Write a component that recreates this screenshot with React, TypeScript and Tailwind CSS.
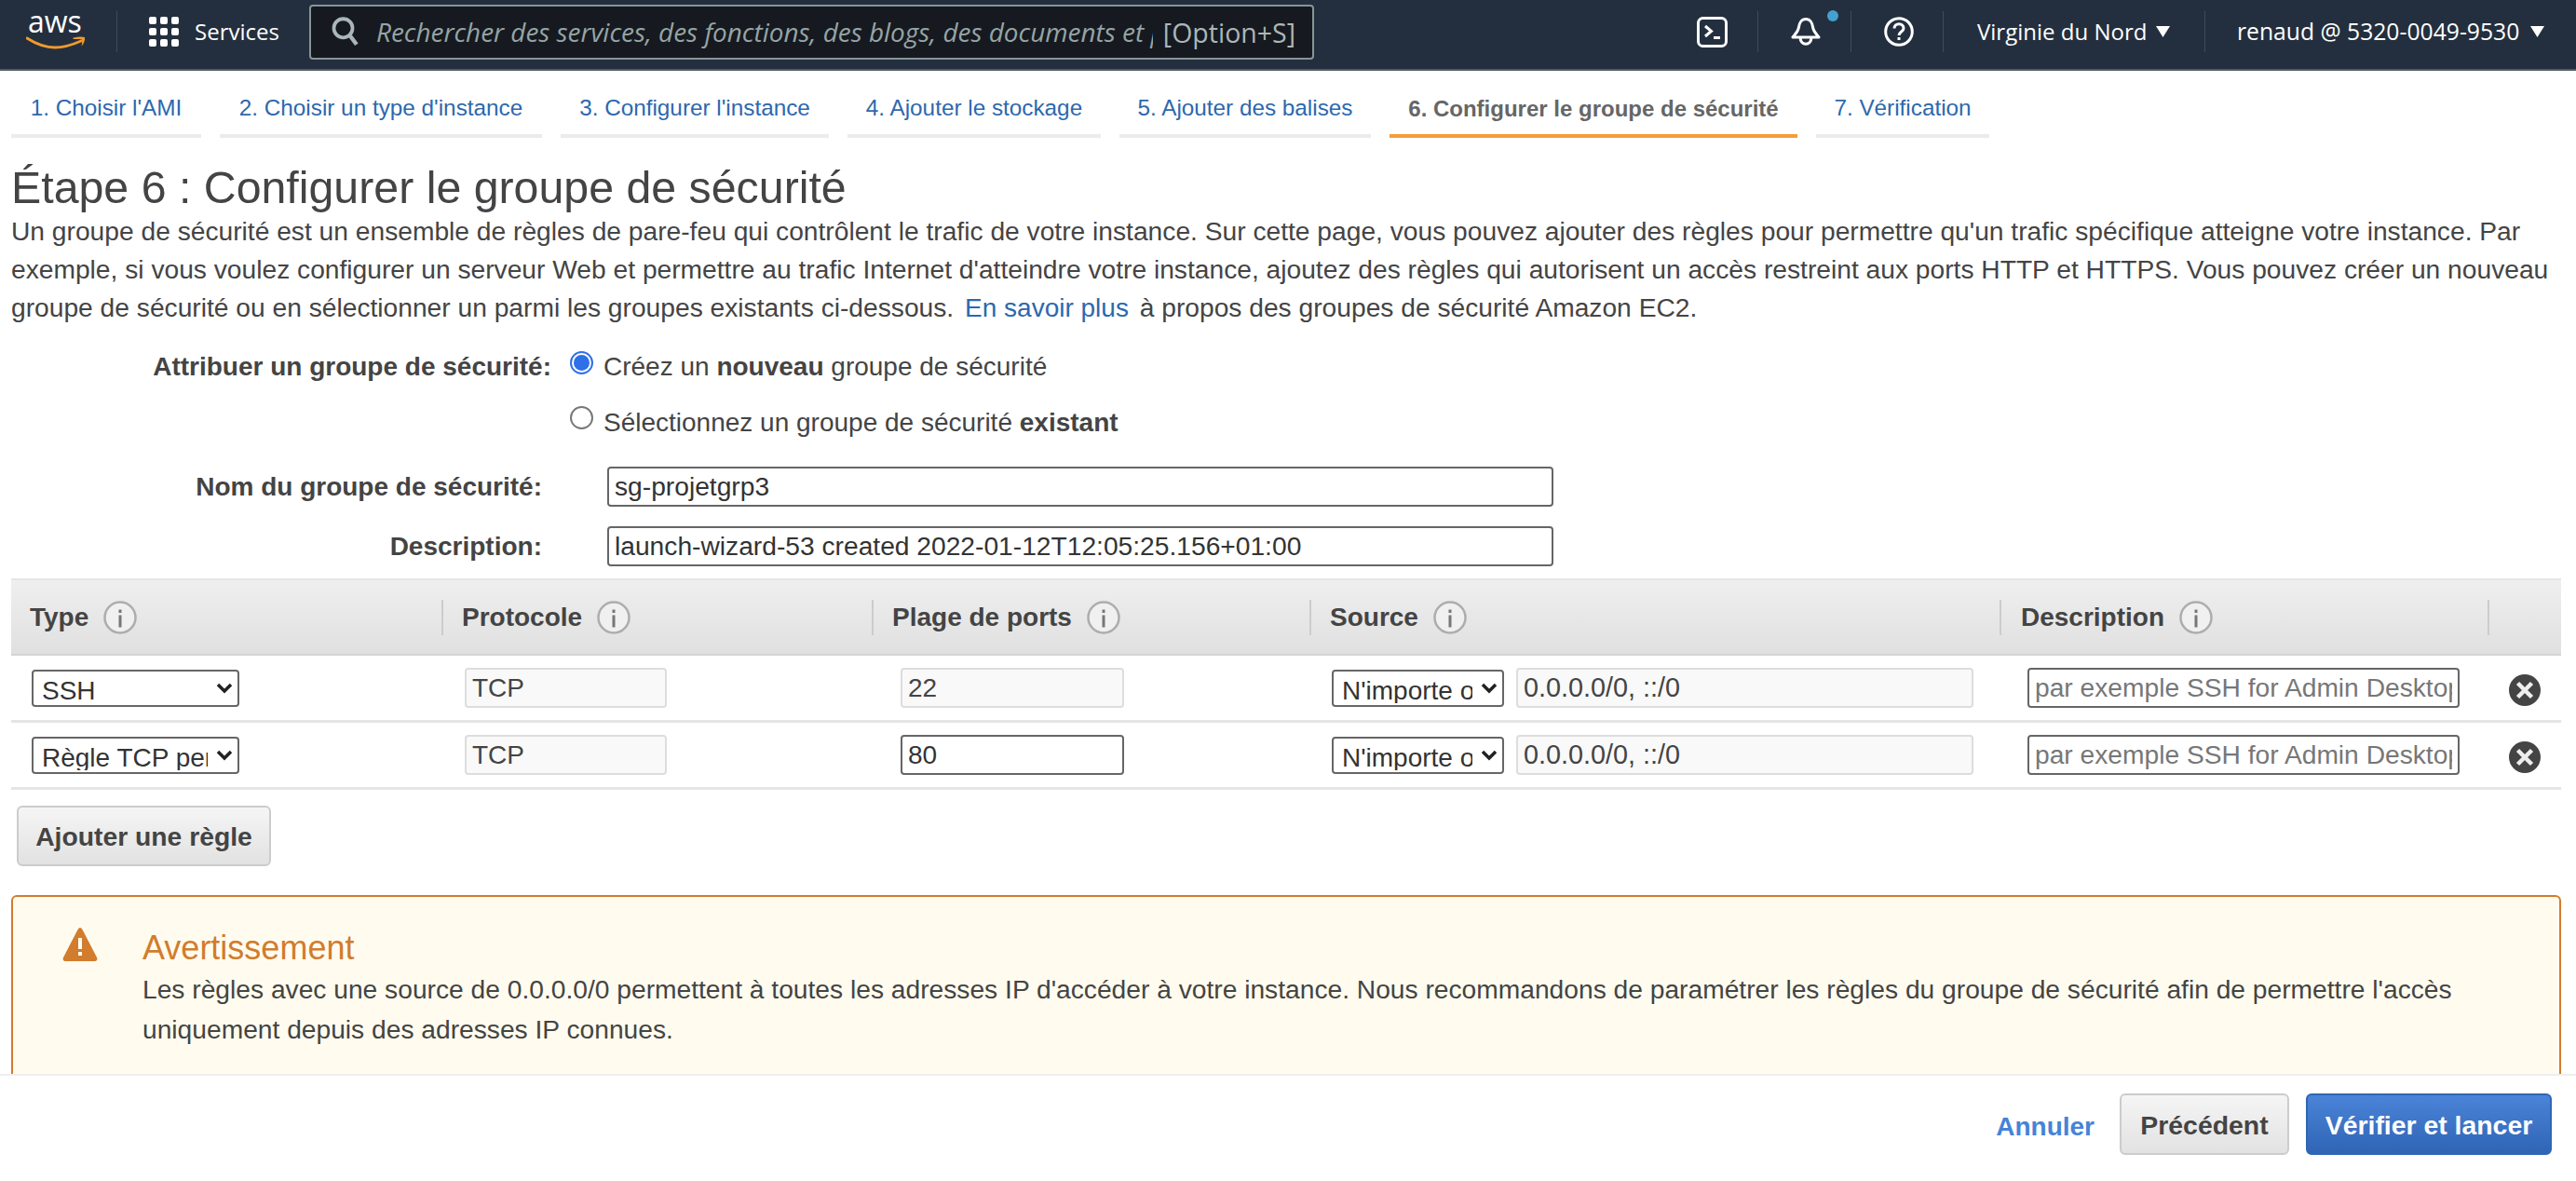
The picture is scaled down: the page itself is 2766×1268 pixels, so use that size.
import React from 'react';

const sans = "font-['Liberation_Sans',Arial,sans-serif]";

function Sep() {
  return <div className="h-11 w-px shrink-0 bg-[#414b58]" />;
}

function Caret() {
  return (
    <svg width="15" height="12" viewBox="0 0 15 12" className="shrink-0">
      <path d="M0 0h15L7.500 12z" fill="#fff" />
    </svg>
  );
}

function AwsLogo() {
  return (
    <div className="relative h-[44px] w-[64px]">
      <span className="absolute left-[2px] top-[-9px] font-['Open_Sans',sans-serif] text-[32px] leading-[40px] text-white">aws</span>
      <svg viewBox="0 0 64 14" width="64" height="14" className="absolute left-0 top-[27px]">
        <path d="M1 2C12 9 22 12 31 12c10 0 19-3 28-7" fill="none" stroke="#f09a2e" strokeWidth="3" strokeLinecap="round" />
        <path d="M51 1.500c4-1 9-1.500 12-.5.500 3-1 7-3.500 9.500 .5-2.500 1-5 .5-7-2-.7-6-.7-9-.5-.7 0-1-1.200 0-1.500z" fill="#f09a2e" />
      </svg>
    </div>
  );
}

function GridIcon() {
  const dots = Array.from({ length: 9 });
  return (
    <div className="grid shrink-0 grid-cols-3 gap-[4px]">
      {dots.map((_, i) => (
        <div key={i} className="h-[8px] w-[8px] rounded-[2px] bg-white" />
      ))}
    </div>
  );
}

function InfoIcon() {
  return (
    <svg width="36" height="36" viewBox="0 0 36 36" className="shrink-0">
      <circle cx="18" cy="18" r="16.500" fill="#f0f0f0" stroke="#adadad" strokeWidth="2.500" />
      <rect x="16.500" y="15.500" width="3" height="13" fill="#777" />
      <rect x="16.500" y="9.500" width="3" height="3.500" fill="#777" />
    </svg>
  );
}

function RemoveIcon() {
  return (
    <svg width="34" height="34" viewBox="0 0 34 34" className="mt-[4px]">
      <circle cx="17" cy="17" r="17" fill="#444" />
      <path d="M9.500 9.500l15 15M24.500 9.500l-15 15" stroke="#eee" strokeWidth="4.500" />
    </svg>
  );
}

function Chevron() {
  return (
    <svg width="18" height="12" viewBox="0 0 18 12" className="pointer-events-none absolute right-[7px] top-[14px]">
      <path d="M2 2l7 7 7-7" fill="none" stroke="#222" strokeWidth="3.500" />
    </svg>
  );
}

function RuleSelect({ value, className }: { value: string; className: string }) {
  return (
    <div className={`relative h-[40px] ${className}`}>
      <select
        defaultValue={value}
        className={`${sans} h-full w-full appearance-none rounded-[4px] border-2 border-[#666] bg-white pb-[2px] pl-[9px] pr-[32px] text-[28px] text-[#333] outline-none`}
      >
        <option>{value}</option>
      </select>
      <Chevron />
    </div>
  );
}

function ReadonlyInput({ value, className }: { value: string; className: string }) {
  return (
    <input
      readOnly
      value={value}
      className={`${sans} h-[43px] rounded-[4px] border-2 border-[#ddd] bg-[#f9f9f9] px-[6px] text-[#444] outline-none ${className}`}
    />
  );
}

function TextInput({ value, placeholder, className }: { value?: string; placeholder?: string; className: string }) {
  return (
    <input
      readOnly
      value={value ?? ''}
      placeholder={placeholder}
      className={`${sans} h-[43px] rounded-[4px] border-2 border-[#666] bg-white px-[6px] text-[#333] outline-none placeholder:text-[#777] ${className}`}
    />
  );
}

function RuleRow({ type, port, portEditable }: { type: string; port: string; portEditable?: boolean }) {
  return (
    <div className="grid h-[72px] grid-cols-[462px_462px_470px_741px_524px_79px] items-center border-b-[3px] border-[#e5e5e5]">
      <div className="pl-[22px]">
        <RuleSelect value={type} className="w-[223px]" />
      </div>
      <div className="pl-[25px]">
        <ReadonlyInput value="TCP" className="w-[217px] text-[28px]" />
      </div>
      <div className="pl-[31px]">
        {portEditable ? <TextInput value={port} className="w-[240px] text-[28px]" /> : <ReadonlyInput value={port} className="w-[240px] text-[28px]" />}
      </div>
      <div className="flex items-center gap-[13px] pl-[24px]">
        <RuleSelect value="N'importe où" className="w-[185px]" />
        <ReadonlyInput value="0.0.0.0/0, ::/0" className="w-[491px] text-[28.800px]" />
      </div>
      <div className="pl-[30px]">
        <TextInput placeholder="par exemple SSH for Admin Desktop" className="w-[464px] text-[28.200px]" />
      </div>
      <div className="flex justify-center">
        <RemoveIcon />
      </div>
    </div>
  );
}

function HeadCell({ label, className }: { label: string; className: string }) {
  return (
    <div className={`flex h-[38px] items-center gap-[16px] border-[#ccc] ${className}`}>
      <span className="text-[28px] font-bold text-[#444]">{label}</span>
      <InfoIcon />
    </div>
  );
}

const tabs = [
  { label: "1. Choisir l'AMI", width: 'w-[204px]' },
  { label: "2. Choisir un type d'instance", width: 'w-[346px]' },
  { label: "3. Configurer l'instance", width: 'w-[288px]' },
  { label: '4. Ajouter le stockage', width: 'w-[272px]' },
  { label: '5. Ajouter des balises', width: 'w-[270px]' },
];

export default function App() {
  return (
    <div className={`${sans} flex h-[1268px] w-[2766px] flex-col overflow-hidden bg-white text-[#444]`}>
      <header className="flex h-[76px] shrink-0 items-center border-b-2 border-[#545b64] bg-[#232f3e] pb-[6px] font-['Open_Sans',sans-serif] text-white">
        <div className="ml-[28px] mr-[33px]">
          <AwsLogo />
        </div>
        <Sep />
        <div className="ml-[34px] mr-[35px] flex w-[137px] items-center gap-[17px]">
          <GridIcon />
          <span className="text-[24px]">Services</span>
        </div>
        <div className="flex h-[59px] w-[1079px] items-center rounded-[4px] border-2 border-[#879596] bg-[#16191f] pl-[22px] pr-[18px]">
          <svg width="30" height="34" viewBox="0 0 24 26" className="shrink-0">
            <circle cx="10" cy="10" r="8" fill="none" stroke="#aab7b8" strokeWidth="3" />
            <path d="M15.500 16l6 8" stroke="#aab7b8" strokeWidth="3.500" />
          </svg>
          <div className="ml-[18px] w-[834px] shrink-0 overflow-hidden whitespace-nowrap pt-[2px] text-[27.900px] italic text-[#95a5a6]">
            Rechercher des services, des fonctions, des blogs, des documents et plus encore
          </div>
          <span className="ml-auto whitespace-nowrap pt-[2px] text-[28.500px] text-[#aab7b8]">[Option+S]</span>
        </div>
        <div className="ml-auto flex items-center">
          <svg width="33" height="33" viewBox="0 0 33 33" className="mr-[32px] shrink-0">
            <rect x="1.500" y="1.500" width="30" height="30" rx="5" fill="none" stroke="#fff" strokeWidth="3" />
            <path d="M9 10l6.500 5.500L9 21" fill="none" stroke="#fff" strokeWidth="3" />
            <rect x="18" y="21" width="7" height="3" fill="#fff" />
          </svg>
          <Sep />
          <div className="relative ml-[35px] mr-[32px] h-[32px] w-[32px] shrink-0">
            <svg width="32" height="32" viewBox="0 0 32 32">
              <path d="M16 2.500c-4.500 0-7 4-7.500 8.500C8 15.500 5 18 2 22h28c-3-4-6-6.500-6.500-11C23 6.500 20.500 2.500 16 2.500z" fill="none" stroke="#fff" strokeWidth="3" strokeLinejoin="round" />
              <path d="M10 22c0 9.500 12 9.500 12 0" fill="none" stroke="#fff" strokeWidth="3" />
            </svg>
            <div className="absolute right-[-19px] top-[-7px] h-[12px] w-[12px] rounded-full bg-[#44a0cf]" />
          </div>
          <Sep />
          <svg width="32" height="32" viewBox="0 0 32 32" className="ml-[35px] mr-[31px] shrink-0">
            <circle cx="16" cy="16" r="14.300" fill="none" stroke="#fff" strokeWidth="3" />
            <path d="M11 12.500c0-6.500 10-6.500 10 0 0 3.500-5 3.500-5 7.500" fill="none" stroke="#fff" strokeWidth="3" />
            <rect x="14.500" y="22" width="3" height="3" fill="#fff" />
          </svg>
          <Sep />
          <div className="ml-[36px] mr-[37px] flex w-[207px] items-center justify-between">
            <span className="text-[24px]">Virginie du Nord</span>
            <Caret />
          </div>
          <Sep />
          <div className="ml-[34px] mr-[34px] flex w-[330px] items-center justify-between">
            <span className="text-[24.700px]">renaud @ 5320-0049-9530</span>
            <Caret />
          </div>
        </div>
      </header>

      <nav className="ml-3 flex shrink-0 gap-5 text-[24.300px]">
        {tabs.map((t) => (
          <div key={t.label} className={`flex h-[72px] items-center justify-center border-b-4 border-[#ebebeb] pt-3 text-[#2d68ad] ${t.width}`}>{t.label}</div>
        ))}
        <div className="flex h-[72px] w-[438px] items-center justify-center border-b-4 border-[#f49d3b] pt-[14px] text-[24px] font-bold text-[#666]">6. Configurer le groupe de sécurité</div>
        <div className="flex h-[72px] w-[186px] items-center justify-center border-b-4 border-[#ebebeb] pt-3 text-[#2d68ad]">7. Vérification</div>
      </nav>

      <main className="min-h-0 flex-1 overflow-hidden px-3">
        <h1 className="mt-[28px] text-[48.300px] leading-[50px] text-[#444]">Étape 6 : Configurer le groupe de sécurité</h1>
        <p className="mt-[2px] text-[28.200px] leading-[41px]">
          Un groupe de sécurité est un ensemble de règles de pare-feu qui contrôlent le trafic de votre instance. Sur cette page, vous pouvez ajouter des règles pour permettre qu'un trafic spécifique atteigne votre instance. Par exemple, si vous voulez configurer un serveur Web et permettre au trafic Internet d'atteindre votre instance, ajoutez des règles qui autorisent un accès restreint aux ports HTTP et HTTPS. Vous pouvez créer un nouveau groupe de sécurité ou en sélectionner un parmi les groupes existants ci-dessous. <a className="mx-1 text-[28px] text-[#2d68ad]">En savoir plus</a> à propos des groupes de sécurité Amazon EC2.
        </p>

        <div className="mt-[25px] flex h-[60px] items-start">
          <div className="w-[580px] text-right text-[28px] font-bold leading-[36px]">Attribuer un groupe de sécurité:</div>
          <div className="ml-[20px] mt-[1px] flex h-[25px] w-[25px] items-center justify-center rounded-full border-2 border-[#2f6fe8] bg-white">
            <div className="h-[17px] w-[17px] rounded-full bg-[#2f6fe8]" />
          </div>
          <div className="ml-[11px] text-[28px] leading-[36px]">Créez un <b>nouveau</b> groupe de sécurité</div>
        </div>
        <div className="flex h-[65px] items-start">
          <div className="ml-[600px] h-[25px] w-[25px] rounded-full border-2 border-[#777] bg-white" />
          <div className="ml-[11px] text-[28px] leading-[36px]">Sélectionnez un groupe de sécurité <b>existant</b></div>
        </div>
        <div className="flex h-[64px] items-start">
          <div className="w-[570px] text-right text-[28px] font-bold leading-[43px]">Nom du groupe de sécurité:</div>
          <TextInput value="sg-projetgrp3" className="ml-[70px] w-[1016px] text-[28.200px]" />
        </div>
        <div className="flex h-[56px] items-start">
          <div className="w-[570px] text-right text-[28px] font-bold leading-[43px]">Description:</div>
          <TextInput value="launch-wizard-53 created 2022-01-12T12:05:25.156+01:00" className="ml-[70px] w-[1016px] text-[28.200px]" />
        </div>

        <div className="w-[2738px]">
          <div className="grid h-[83px] grid-cols-[462px_462px_470px_741px_524px_79px] items-center border-t-2 border-b-2 border-t-[#e5e5e5] border-b-[#d4d4d4] bg-gradient-to-b from-[#efefef] to-[#e0e0e0]">
            <HeadCell label="Type" className="pl-[20px]" />
            <HeadCell label="Protocole" className="border-l-2 pl-[20px]" />
            <HeadCell label="Plage de ports" className="border-l-2 pl-[20px]" />
            <HeadCell label="Source" className="border-l-2 pl-[20px]" />
            <HeadCell label="Description" className="border-l-2 pl-[21px]" />
            <div className="h-[38px] border-l-2 border-[#ccc]" />
          </div>
          <RuleRow type="SSH" port="22" />
          <RuleRow type="Règle TCP personnalisée" port="80" portEditable />
        </div>

        <button className="ml-[6px] mt-[17px] block h-[65px] w-[273px] rounded-[6px] border-2 border-[#ccc] bg-gradient-to-b from-[#f5f5f5] to-[#e2e2e2] pt-[1px] text-[28.300px] font-bold text-[#444]">
          Ajouter une règle
        </button>

        <div className="mt-[31px] flex h-[240px] w-[2738px] rounded-[6px] border-2 border-[#d27c2d] bg-[#fffcef] pt-[33px]">
          <svg width="38" height="36" viewBox="0 0 38 36" className="ml-[53px] shrink-0">
            <path d="M19 0c1 0 2 1 3 3l15 29c1 2 0 4-2 4H3c-2 0-3-2-2-4L16 3c1-2 2-3 3-3z" fill="#d27c2d" />
            <rect x="17" y="11" width="4" height="12" fill="#fffcef" />
            <rect x="17" y="26" width="4" height="4" fill="#fffcef" />
          </svg>
          <div className="ml-[48px]">
            <div className="text-[36px] leading-[44px] text-[#d27c2d]">Avertissement</div>
            <p className="mt-[1px] w-[2540px] text-[28.200px] leading-[43px]">
              Les règles avec une source de 0.0.0.0/0 permettent à toutes les adresses IP d'accéder à votre instance. Nous recommandons de paramétrer les règles du groupe de sécurité afin de permettre l'accès uniquement depuis des adresses IP connues.
            </p>
          </div>
        </div>
      </main>

      <footer className="flex h-[115px] shrink-0 items-start justify-end border-t-2 border-[#eee] bg-white pr-[26px] pt-[19px] text-[28.400px] font-bold">
        <a className="mr-[27px] mt-[15px] text-[28px] text-[#4683d6]">Annuler</a>
        <button className="mr-[18px] h-[66px] w-[182px] rounded-[6px] border-2 border-[#ccc] bg-gradient-to-b from-[#f5f5f5] to-[#e2e2e2] pt-[2px] text-[#444]">Précédent</button>
        <button className="h-[66px] w-[264px] rounded-[6px] border-2 border-[#2f66b5] bg-gradient-to-b from-[#4a84d8] to-[#3065b5] pt-[2px] text-white">Vérifier et lancer</button>
      </footer>
    </div>
  );
}
